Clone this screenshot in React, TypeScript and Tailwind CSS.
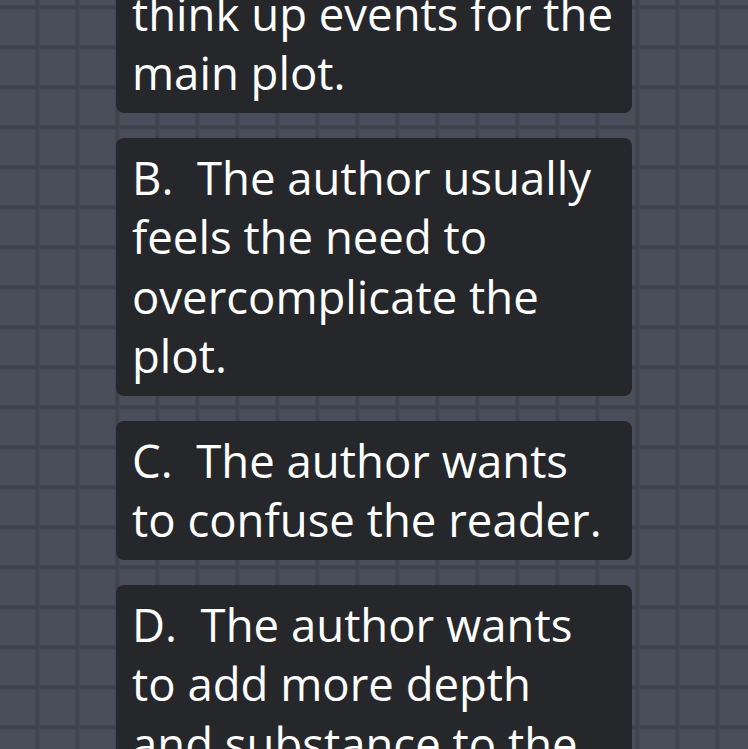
import React from "react";

const cards: string[][] = [
  ["A.\u00a0 The author struggles to", "think up events for the", "main plot."],
  ["B.\u00a0 The author usually", "feels the need to", "overcomplicate the", "plot."],
  ["C.\u00a0 The author wants", "to confuse the reader."],
  ["D.\u00a0 The author wants", "to add more depth", "and substance to the", "story."],
];

export default function App() {
  return (
    <div
      className="w-[748px] h-[749px] overflow-hidden bg-[#4a4e5a] bg-[linear-gradient(to_right,#454954_0px,#3f434d_1.5px,#3f434d_3px,#464a55_4.5px,transparent_5px),linear-gradient(to_bottom,#454954_0px,#3f434d_1.5px,#3f434d_3px,#464a55_4.5px,transparent_5px)] bg-size-[40px_40px] bg-position-[35px_5px]"
      style={{ fontFamily: '"Open Sans", "Noto Sans", sans-serif' }}
    >
      <div className="flex flex-col gap-[25px] pl-[116px] w-[632px] mt-[-86px]">
        {cards.map((lines, i) => (
          <div
            key={i}
            className="bg-[#25272b] rounded-lg pl-[16px] pr-[10px] pt-[10px] pb-[10px] text-white text-[45.5px] leading-[59.5px]"
          >
            {lines.map((l, j) => (
              <div key={j} className="whitespace-nowrap">
                {l}
              </div>
            ))}
          </div>
        ))}
      </div>
    </div>
  );
}
